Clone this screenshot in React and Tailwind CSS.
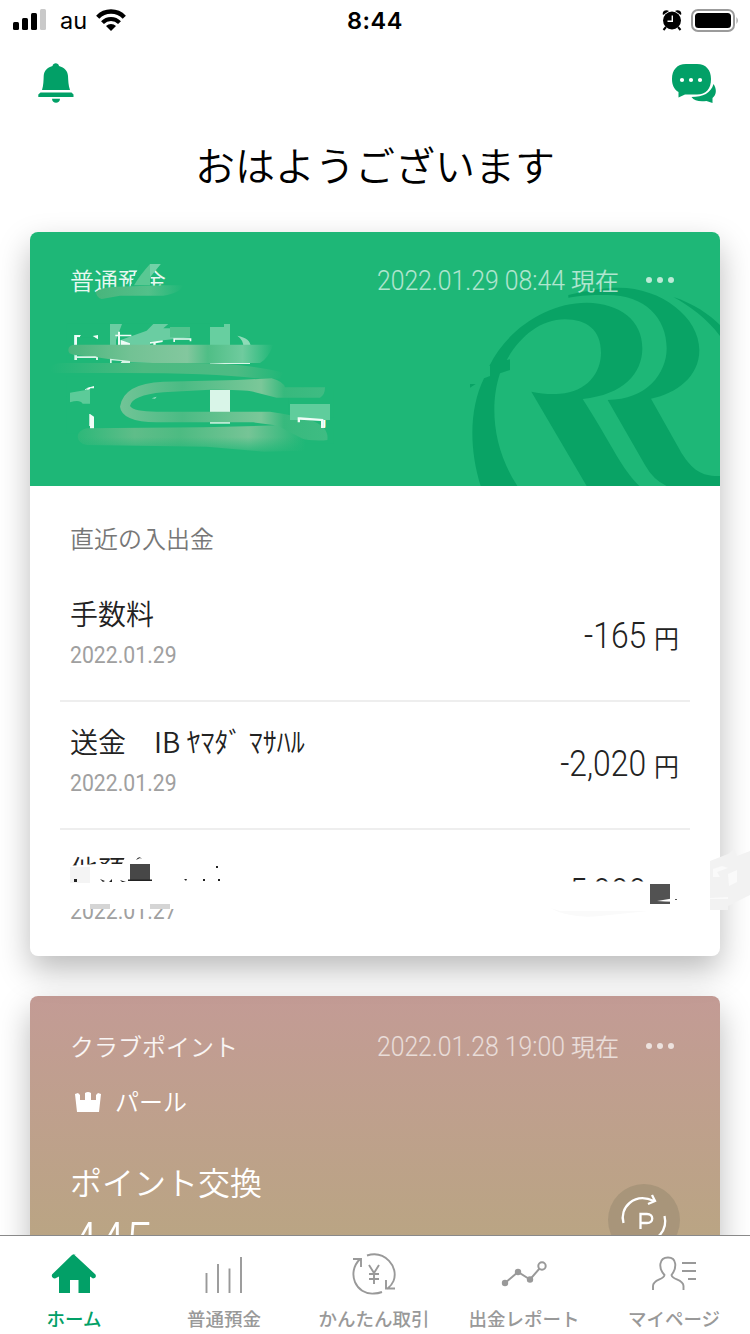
import React from 'react';

const ROBOTO = 'font-[Roboto,sans-serif]';

function StatusBar() {
  return (
    <div className="h-10 shrink-0 grid grid-cols-3 items-center font-[Inter,sans-serif] text-black">
      <div className="flex items-center pl-[13px]">
        <svg width="33" height="22" viewBox="0 0 33 22" className="shrink-0">
          <rect x="0" y="13" width="6" height="8" rx="1.5" />
          <rect x="9" y="9" width="6" height="12" rx="1.5" />
          <rect x="18" y="4" width="6" height="17" rx="1.5" />
          <rect x="27" y="0" width="6" height="21" rx="1.5" fill="#c9c9c9" />
        </svg>
        <span className="ml-[14px] w-[27px] pt-0.5 text-[23.5px] leading-none">au</span>
        <svg width="30" height="22" viewBox="0 0 30 22" className="ml-[9px] shrink-0">
          <path d="M1.7 8.2 A18.5 18.5 0 0 1 28.3 8.2" fill="none" stroke="#000" strokeWidth="4.4" />
          <path d="M6.5 13.7 A11.8 11.8 0 0 1 23.5 13.7" fill="none" stroke="#000" strokeWidth="4" />
          <path d="M10 17 A7.5 7.5 0 0 1 20 17 L15 22 Z" />
        </svg>
      </div>
      <div className="pt-0.5 text-center text-[23.5px] leading-none font-semibold tracking-[0.6px]">8:44</div>
      <div className="flex items-center justify-end pr-[11px]">
        <svg width="20" height="22" viewBox="0 0 20 22" className="mr-[9px] shrink-0">
          <circle cx="10" cy="11.5" r="9" />
          <path d="M4 18 L1.5 21 M16 18 L18.5 21" stroke="#000" strokeWidth="2" />
          <path d="M1 6 C-0.5 2 4 0 7 2 Z M19 6 C20.5 2 16 0 13 2 Z" />
          <path d="M10.3 6.5 V12.3 H5.5" fill="none" stroke="#fff" strokeWidth="1.4" />
        </svg>
        <svg width="48" height="23" viewBox="0 0 48 23" className="shrink-0">
          <rect x="1" y="1" width="42" height="21" rx="6" fill="none" stroke="#9b9b9b" strokeWidth="2" />
          <rect x="4" y="4" width="36" height="15" rx="3.5" />
          <path d="M45.5 8 Q48 11.5 45.5 15 Z" fill="#9b9b9b" />
        </svg>
      </div>
    </div>
  );
}

function Header() {
  return (
    <header className="h-[192px] shrink-0">
      <div className="flex justify-between pl-[38px] pr-[34px] pt-[23px]">
        <svg width="36" height="41" viewBox="0 0 36 41" fill="#02a067">
          <path d="M4 27 C5.5 22 5.5 18 5.7 13 C6 8 9 4.5 14.5 3 C15 -0.8 20.5 -0.8 21 3 C26.5 4.5 29.7 8 30 13 C30.3 18 30.3 22 32 27 Z" />
          <path d="M2.5 29.5 H33.5 L35.5 31.5 V34 H0.3 V31.5 Z" />
          <path d="M14 35.7 H22 C22 41 14 41 14 35.7 Z" />
        </svg>
        <svg width="44" height="40" viewBox="0 0 44 40" className="mt-px" fill="#02a067">
          <path d="M41.5 20 C45 25 44.5 31 40.5 34 L40.5 39 L34.5 37 C28 38 22 37 19.5 33 C31 33 39 29 41.5 20 Z" />
          <path d="M14 0 H25 C34 0 39 6 39 15 C39 25 34 30.5 25 30.5 H13 L6.5 33.5 V28 C2 25.5 0 21 0 15 C0 6 5 0 14 0 Z" />
          <circle cx="10" cy="16" r="2.1" fill="#fff" />
          <circle cx="19" cy="16" r="2.1" fill="#fff" />
          <circle cx="28" cy="16" r="2.1" fill="#fff" />
        </svg>
      </div>
      <h1 className="mt-[30px] text-center text-[40px] leading-[60px] font-[350] text-black">おはようございます</h1>
    </header>
  );
}

function Dots() {
  return (
    <span className="flex w-7 justify-between">
      <i className="size-[6px] rounded-full bg-white/70" />
      <i className="size-[6px] rounded-full bg-white/70" />
      <i className="size-[6px] rounded-full bg-white/70" />
    </span>
  );
}

function CardTop({ label, date }) {
  return (
    <div className="flex h-9 items-center justify-between pl-10 pr-[46px]">
      <span className="text-[24px] font-[350] text-white/90">{label}</span>
      <div className="flex items-center text-white/65">
        <span className="w-[195px]">
          <span className={`${ROBOTO} inline-block origin-left scale-x-[0.885] whitespace-nowrap pl-px pt-px text-[28px] font-light`}>{date}</span>
        </span>
        <span className="mr-[27px] text-[24px] font-[350]">現在</span>
        <Dots />
      </div>
    </div>
  );
}

function BankMark() {
  return (
    <svg className="absolute right-0 top-0" width="360" height="254" viewBox="0 6 1080 762" fill="#09a365">
      <path d="M388 408 C440 300 560 218 680 218 C780 220 847 270 847 355 C847 430 790 495 668 507 C705 565 740 625 770 677 C790 710 810 740 838 768 L680 768 L514 485 C545 492 575 493 600 491 C680 485 723 430 723 368 C723 300 680 268 615 268 C540 268 480 320 440 390 L450 388 V420 L420 430 C390 520 395 650 472 768 L362 768 C325 650 330 530 372 445 L390 438 V408 Z" />
      <path d="M625 203 V195 C690 180 740 173 770 173 C900 170 1018 260 1018 360 C1018 440 950 490 873 506 L965 670 C1000 725 1030 740 1080 738 V768 L920 768 Q880 750 855 705 L743 510 C860 510 920 430 920 355 C920 260 850 190 730 195 C690 194 650 198 625 203 Z" />
      <path d="M940 201 C1000 220 1050 255 1080 285 V318 C1040 265 990 228 940 201 Z" />
      <path d="M330 462 H347 L330 473 Z" />
    </svg>
  );
}

// brush strokes hiding the account number and the balance
function BalanceMask() {
  return (
    <svg className="absolute left-0 top-0" width="330" height="238" viewBox="0 6 990 714">
      <defs>
        <linearGradient id="top">
          <stop offset="0" stopColor="#48b57c" />
          <stop offset="0.6" stopColor="#53c08a" />
          <stop offset="1" stopColor="#1eb777" />
        </linearGradient>
        <linearGradient id="wide">
          <stop offset="0" stopColor="#48b57c" />
          <stop offset="0.3" stopColor="#72c294" />
          <stop offset="0.58" stopColor="#83c79e" />
          <stop offset="0.68" stopColor="#4fbe86" />
          <stop offset="0.85" stopColor="#6fcb9e" />
          <stop offset="1" stopColor="#1eb777" />
        </linearGradient>
        <linearGradient id="thin">
          <stop offset="0" stopColor="#1eb777" />
          <stop offset="0.4" stopColor="#4dba81" />
          <stop offset="0.8" stopColor="#4dbb84" />
          <stop offset="1" stopColor="#1eb777" />
        </linearGradient>
        <linearGradient id="loop">
          <stop offset="0" stopColor="#72c497" />
          <stop offset="0.3" stopColor="#4bbb84" />
          <stop offset="0.68" stopColor="#7bc799" />
          <stop offset="0.79" stopColor="#37b97d" />
          <stop offset="1" stopColor="#3fbc83" />
        </linearGradient>
        <linearGradient id="bottom">
          <stop offset="0" stopColor="#2db879" />
          <stop offset="0.25" stopColor="#5fbd89" />
          <stop offset="0.45" stopColor="#4dbb82" />
          <stop offset="0.75" stopColor="#76c496" />
          <stop offset="0.92" stopColor="#3aba7f" />
          <stop offset="1" stopColor="#1eb777" />
        </linearGradient>
        <linearGradient id="fade" x1="0" x2="0" y1="0" y2="1">
          <stop offset="0.4" stopColor="#1eb777" stopOpacity="0" />
          <stop offset="1" stopColor="#1eb777" stopOpacity="0.85" />
        </linearGradient>
      </defs>
      <g fill="#1eb777">
        <path d="M330 102 H362 V172 H300 Z" />
        <path d="M110 280 H545 V345 H150 V315 H110 Z" />
        <path d="M110 315 H133 V345 H110 Z M140 322 H197 V345 H140 Z" />
        <path d="M110 376 H545 V420 H110 Z" />
        <path d="M110 440 H195 V466 L165 478 L178 500 V610 H110 Z M178 478 H195 V552 H178 Z" />
        <path d="M775 480 H910 V562 H775 Z M775 594 H910 V640 H775 Z M812 572 H870 V600 H812 Z" />
      </g>
      <path d="M133 315 H153 L148 321 H141 V345 H133 Z M188 318 L204 315 V328 Z" fill="#effcf6" />
      <path d="M180 552 L192 560 V598 H180 Z M168 475 L192 468 V475 Z" fill="#effcf6" />
      <path d="M360 102 H392 L360 142 V166 H312 Q330 135 360 102 Z" fill="#59c893" />
      <path d="M360 102 H392 L360 142 Z" fill="#72d2a8" />
      <path d="M198 185 Q215 172 260 170 L400 166 L460 166 Q450 190 400 197 H270 L215 207 Q198 202 198 185 Z" fill="url(#top)" />
      <path d="M240 282 H276 L258 330 V345 H240 Z M272 330 L350 302 L370 282 H415 L400 295 H480 V322 L360 335 V345 H272 Z" fill="#6acda2" />
      <path d="M420 291 H480 V322 H420 Z" fill="#51c38d" />
      <path d="M256 314 H264 V305 H270 V314 H304 V319 H270 V345 H264 V319 H256 Z M272 330 L300 340 V345 H272 Z M360 336 L398 331 V336 L377 340 V345 H370 V340 L360 341 Z M430 325 H484 V334 H479 V329 H435 V336 H430 Z" fill="#effcf6" />
      <path d="M540 291 H582 V282 H600 V345 H540 Z" fill="#67cfa0" />
      <path d="M622 317 Q662 325 662 350 H640 Q640 330 622 317 Z" fill="#8fdbb8" />
      <path d="M115 360 Q115 343 140 344 H730 Q715 385 690 399 H370 L300 397 L200 382 L130 374 Q115 372 115 360 Z" fill="url(#wide)" />
      <path d="M133 376 H141 V379 H196 L204 382 V390 H198 V384 H141 V390 H133 Z M240 386 L300 393 V399 H272 L276 393 L245 391 V399 H240 Z M540 399 H660 V402 H540 Z" fill="#d9f5e8" />
      <path d="M60 416 Q65 399 100 399 H460 Q650 398 760 428 L750 446 H690 Q550 428 250 429 H80 Q62 430 60 416 Z" fill="url(#thin)" />
      <path d="M540 480 H600 V581 H540 Z" fill="#d9f5e8" />
      <path d="M725 445 Q760 455 765 472 H885 Q885 495 870 503 H740 L675 487 Q660 478 540 479 L400 487 Q305 496 300 528 Q310 545 380 545 H720 Q790 555 840 570 Q898 590 892 630 Q860 635 800 625 L730 585 L670 577 H380 Q275 575 270 530 Q280 460 400 455 L620 450 Z" fill="url(#loop)" />
      <path d="M170 595 L520 592 L740 586 L825 630 Q830 650 820 662 L700 665 L530 650 L170 645 Q145 640 143 620 Q145 600 170 595 Z" fill="url(#bottom)" />
      <path d="M140 590 H832 V668 H140 Z" fill="url(#fade)" />
      <path d="M120 488 L180 478 V521 H158 Q150 508 120 517 Z" fill="#5ccb99" />
      <path d="M780 522 H900 V570 H780 Z" fill="#5fcd9c" />
      <path d="M803 562 H810 L880 567 V594 H873 V573 L810 569 V577 H803 Z" fill="#effcf6" />
      <path d="M365 505 L380 500 L375 506 Z" fill="#9fe0c2" />
    </svg>
  );
}

function Entry({ title, date, amount, last }) {
  return (
    <li className={`mx-[30px] flex h-32 justify-between px-[10px] ${last ? '' : 'border-b-2 border-[#eeeeee]'}`}>
      <div className="pt-[18px]">
        <p className="whitespace-pre text-[28px] leading-[42px] font-[350] text-[#222]">{title}</p>
        <p className={`${ROBOTO} mt-px origin-left scale-x-[0.885] text-[24px] leading-10 text-[#a0a0a0]`}>{date}</p>
      </div>
      <p className="flex items-baseline pt-10 pr-px text-[#222]">
        <span className={`${ROBOTO} origin-right scale-x-[0.885] text-[36px] leading-[44px] font-light`}>{amount}</span>
        <span className="ml-2 text-[25px] leading-none font-[350]">円</span>
      </p>
    </li>
  );
}

function EntryMask() {
  return (
    <svg className="absolute bottom-0 left-0 overflow-visible" width="690" height="128" viewBox="30 828 690 128">
      <g fill="#fff">
        <path d="M66 866 L96 864 H122 L128 850 H160 V896 H66 Z" />
        <path d="M66 894 H184 V909 H66 Z" />
        <path d="M555 860 H571 V895 H555 Z M560 881.5 H690 V912 H560 Z M644 860 H690 V900 H644 Z M586 874 H595 V905 H586 Z" />
      </g>
      <path d="M136 860 Q139 855 142 859 L140 858 Z" fill="#222" />
      <path d="M70 867 H90 V883 H70 Z" fill="#f4f4f4" />
      <path d="M130 864 H150 V880 H130 Z" fill="#474747" />
      <path d="M128 879.5 H152 V881 H128 Z M74 879 H77 V882 H74 Z M100 879 L105 881 L103 882 Z M112 879 L109 882 H112 Z M120 880 L126 882 H122 Z M184 879 H187 L186 881 Z M203 879 H205 V881 H203 Z M216 866 H218 V868 H216 Z M218 879 H220 V881 H218 Z" fill="#222" />
      <path d="M90 904 H110 V909 H90 Z M150 904 H170 V909 H150 Z" fill="#d5d5d5" />
      <path d="M560 911 H648 L600 916 Q570 919 550 908 Z" fill="#fafafa" />
      <path d="M650 884 H670 V904 H650 Z" fill="#525252" />
      <path d="M657 901 L675 898 L712 899 Q680 903 657 901 Z" fill="#fff" />
      <path d="M675 899 H677 V900 H675 Z" fill="#555" />
      <path d="M710 861 L728 854 L734 849 L737 856 L750 851 V895 L728 906 V910 H710 Z" fill="#f2f2f2" />
      <path d="M713 869 L722 866 L728 868 L717 872 L720 877 H713 Z M728 874 L737 870 V882 L729 886 Z M710 898 L728 897 V899 H710 Z" fill="#fafafa" />
    </svg>
  );
}

function AccountCard() {
  return (
    <section className="relative h-[724px] shrink-0 rounded-[8px] bg-white shadow-[0_14px_32px_rgba(0,0,0,0.27)]">
      <div className="relative h-[254px] overflow-hidden rounded-t-[8px] bg-[#1eb777] pt-[30px]">
        <BankMark />
        <div className="relative">
          <CardTop label="普通預金" date="2022.01.29 08:44" />
        </div>
        <p className="mt-[23px] pl-10 text-[32px] leading-[48px] font-[350] text-white">口座番号</p>
        <p className="flex items-baseline pl-[43px] text-white">
          <span className={`${ROBOTO} w-[223px] text-[58px] leading-[75px] font-light`}>
            <span className="inline-block origin-left scale-x-[0.87]">1</span>
          </span>
          <span className="text-[32px] leading-none font-[350]">円</span>
        </p>
        <BalanceMask />
      </div>
      <h2 className="pl-10 pt-[34px] text-[24px] leading-9 font-[350] text-[#777]">直近の入出金</h2>
      <ul className="mt-[18px]">
        <Entry title="手数料" date="2022.01.29" amount="-165" />
        <Entry title="送金　IB ﾔﾏﾀﾞ ﾏｻﾊﾙ" date="2022.01.29" amount="-2,020" />
        <Entry title="他預金" date="2022.01.27" amount="-5,000" last />
      </ul>
      <EntryMask />
    </section>
  );
}

function PointCard() {
  return (
    <section className="mt-10 h-[360px] shrink-0 rounded-[8px] bg-linear-to-b from-[#c39b95] to-[#b5a97a] pt-8 shadow-[0_14px_32px_rgba(0,0,0,0.27)]">
      <CardTop label="クラブポイント" date="2022.01.28 19:00" />
      <div className="mt-5 flex h-9 items-center pl-[45px] text-[24px] font-[350] text-white">
        <svg width="26" height="20" viewBox="0 0 26 20" className="mr-[14px]" fill="#fff">
          <path d="M2 20 L0 2 L3 1 L5 3 V8 H10 V1 Q13 -1 16 1 V8 H21 V3 L23 1 L26 2 L24 20 Z" />
        </svg>
        <span className="pb-0.5">パール</span>
      </div>
      <div className="flex justify-between pl-10 pr-10 pt-[37px] text-white">
        <div>
          <p className="text-[32px] leading-[48px] font-[350]">ポイント交換</p>
          <p className={`${ROBOTO} mt-px origin-left scale-x-[0.87] pl-px text-[56px] leading-[75px] font-light`}>445</p>
        </div>
        <svg width="72" height="72" viewBox="0 0 72 72" className="mt-[27px]" fill="none" stroke="#fff" strokeWidth="2.3">
          <circle cx="36" cy="36" r="36" fill="#a8957a" stroke="none" />
          <path d="M15.5 39 C11 24 26 8 46 17 M44 11 L47 17 L40 20" />
          <path d="M56.5 32 C60 46 49 58 36 58" />
          <path d="M32.5 45 V30 H39 C46 30 46 39 39 39 H32.5" />
        </svg>
      </div>
    </section>
  );
}

const tabs = [
  {
    label: 'ホーム',
    icon: (
      <path d="M24 1.5 L45.5 21.5 Q47 25 43 25.500 L40 23.5 V40 H28.5 V27 H20 V40 H9 V23.5 L5 25.5 Q1 25 2 21.5 L22 2 Q24 0.5 26 2 Z" fill="#02a067" stroke="none" />
    ),
  },
  { label: '普通預金', icon: <path d="M6.5 20 V40 M18 11 V40 M29.5 15.5 V40 M41 4 V40" /> },
  {
    label: 'かんたん取引',
    icon: (
      <>
        <path d="M17 2.5 C35 -3 49 14 43.5 28 Q42 32 37 36 M36 27 V35.5 H45 M10 6 C-4 20 6 42 24 40.5 Q28 40.5 32 39 M3 6 H11 V14" />
        <path d="M19 12 L24 20 L29 12 M24 20 V31 M19 21 H29 M19 26 H29" />
      </>
    ),
  },
  {
    label: '出金レポート',
    icon: (
      <>
        <path d="M5 30 L18 19 L30 26.5 L40 15" strokeWidth="2" />
        <g fill="#999" stroke="none">
          <circle cx="5" cy="30" r="3.2" />
          <circle cx="18" cy="19" r="3.2" />
          <circle cx="30" cy="26.5" r="3.2" />
        </g>
        <circle cx="42" cy="13" r="3.7" fill="#fff" strokeWidth="2" />
      </>
    ),
  },
  {
    label: 'マイページ',
    icon: (
      <>
        <path d="M3 37 V33 C3 26 14 27 14.5 22 C8 15 9 4.5 18 4.5 C27 4.5 27 15 21.5 22 C22 27 33.5 26 33.5 33 V37" />
        <path d="M32 10 H46 M32 18 H46 M38 26 H46" />
      </>
    ),
  },
];

function TabBar() {
  return (
    <nav className="relative grid h-[99px] shrink-0 grid-cols-5 border-t border-[#898989] bg-white">
      {tabs.map((tab, i) => (
        <div key={tab.label} className={`flex flex-col items-center pt-[17px] pr-0.5 ${i === 0 ? 'text-[#02a067]' : 'text-[#999]'}`}>
          <svg width="48" height="42" viewBox="0 0 48 42" fill="none" stroke="#999" strokeWidth="1.9">
            {tab.icon}
          </svg>
          <span className="mt-[9px] whitespace-nowrap text-[18.5px] leading-7 font-medium">{tab.label}</span>
        </div>
      ))}
    </nav>
  );
}

export default function App() {
  return (
    <div className="flex h-[1334px] w-[750px] flex-col overflow-hidden bg-white font-['Noto_Sans_CJK_JP',sans-serif]">
      <StatusBar />
      <Header />
      <main className="flex min-h-0 flex-1 flex-col px-[30px]">
        <AccountCard />
        <PointCard />
      </main>
      <TabBar />
    </div>
  );
}
